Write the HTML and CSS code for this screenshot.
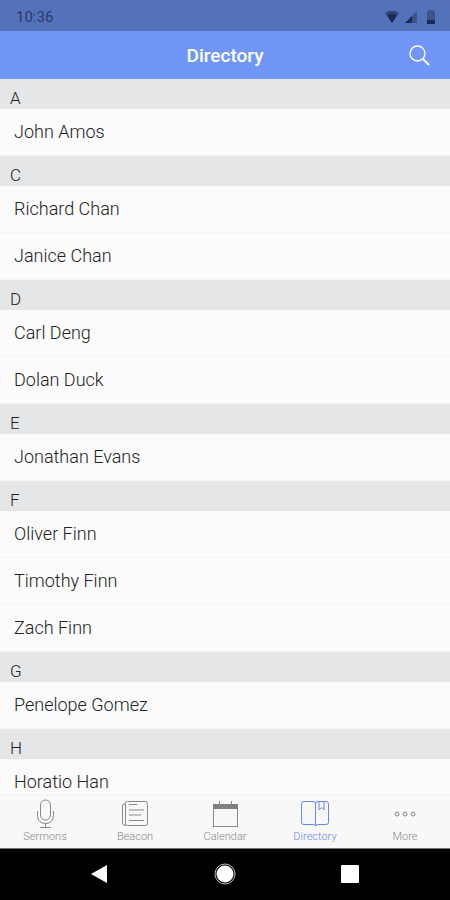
FILE: index.html
```html
<!DOCTYPE html>
<html lang="en">
<head>
<meta charset="utf-8">
<meta name="viewport" content="width=device-width, initial-scale=1">
<title>Directory</title>
<link rel="stylesheet" href="styles.css">
</head>
<body>
<div class="status">
  <span>10:36</span>
  <div class="status-icons">
    <svg width="16" height="14" viewBox="0 0 16 14"><path d="M1 3Q8-2 15 3L8 13Z" fill="#35477c"/><path d="M3 5Q8 2 13 5L8 13Z" fill="#1e2b55"/></svg>
    <svg width="14" height="14" viewBox="0 0 14 14"><path d="M13 1V13H1Z" fill="#3f5388"/><path d="M8 6V13H1Z" fill="#1e2b55"/></svg>
    <svg width="10" height="14" viewBox="0 0 10 14"><path d="M3 0H7V1H9V14H1V1H3Z" fill="#3f5388"/><path d="M1 10H9V14H1Z" fill="#1e2b55"/></svg>
  </div>
</div>
<header class="bar">
  <h1>Directory</h1>
  <button class="search" type="button" aria-label="Search">
    <svg width="22" height="22" viewBox="0 0 22 22" fill="none" stroke="#fff"><circle cx="9.500" cy="9.500" r="7.500" stroke-width="1.300"/><path d="M15 15L21 21" stroke-width="2"/></svg>
  </button>
</header>
<main class="list">
  <section><h2>A</h2><ul><li>John Amos</li></ul></section>
  <section><h2>C</h2><ul><li>Richard Chan</li><li>Janice Chan</li></ul></section>
  <section><h2>D</h2><ul><li>Carl Deng</li><li>Dolan Duck</li></ul></section>
  <section><h2>E</h2><ul><li>Jonathan Evans</li></ul></section>
  <section><h2>F</h2><ul><li>Oliver Finn</li><li>Timothy Finn</li><li>Zach Finn</li></ul></section>
  <section><h2>G</h2><ul><li>Penelope Gomez</li></ul></section>
  <section><h2>H</h2><ul><li>Horatio Han</li></ul></section>
</main>
<nav class="tabs">
  <a href="#sermons"><svg width="30" height="30" viewBox="0 0 30 30"><rect x="10.500" y="1" width="10" height="20" rx="5"/><path d="M7.500 12V16.500Q8 24.500 15.500 24.500T23.500 16.500V12M15.500 24.500V29M10 28.500H21"/></svg>Sermons</a>
  <a href="#beacon"><svg width="30" height="30" viewBox="0 0 30 30"><rect x="5.500" y="2.500" width="22" height="24" rx="2"/><path d="M5.500 5H4Q2.500 5 2.500 7V24Q2.500 26.500 6 26.500M9 5.500H17M9 11H24M9 16H21M9 21.500H24"/></svg>Beacon</a>
  <a href="#calendar"><svg width="30" height="30" viewBox="0 0 30 30"><rect x="3.500" y="5.500" width="24" height="22"/><path class="solid" d="M3 5H28V10H3Z"/><path d="M9.500 2V6M21.500 2V6"/></svg>Calendar</a>
  <a href="#directory" class="active" aria-current="page"><svg width="30" height="30" viewBox="0 0 30 30"><path d="M4 2.500H13L15.500 3.500L18 2.500H26Q28.500 2.500 28.500 5V23.500Q28.500 25.500 26 25.500H18L15.500 26.500L13 25.500H4Q1.500 25.500 1.500 23.500V5Q1.500 2.500 4 2.500M15.500 3.500V27M19 3V11L21.500 8.500L24 11V3"/></svg>Directory</a>
  <a href="#more"><svg width="30" height="30" viewBox="0 0 30 30"><circle cx="7" cy="15" r="2"/><circle cx="15" cy="15" r="2"/><circle cx="23" cy="15" r="2"/></svg>More</a>
</nav>
<div class="system">
  <button type="button" aria-label="Back"><svg width="24" height="24" viewBox="0 0 24 24"><path d="M3 12L19 3V21Z" fill="#fff"/></svg></button>
  <button type="button" aria-label="Home"><svg width="24" height="24" viewBox="0 0 24 24"><circle cx="12" cy="12" r="8.500" fill="#fff"/><circle cx="12" cy="12" r="10" fill="none" stroke="#bbb"/></svg></button>
  <button type="button" aria-label="Recent apps"><svg width="24" height="24" viewBox="0 0 24 24"><rect x="3" y="3" width="18" height="18" rx="1" fill="#fff"/></svg></button>
</div>
</body>
</html>
```
FILE: styles.css
```css
* { box-sizing: border-box; }
body {
  margin: 0;
  height: 100vh;
  display: flex;
  flex-direction: column;
  background: #fbfbfb;
  color: #222;
  font-family: Roboto, sans-serif;
  font-size: 18px;
  font-weight: 300;
}
svg { display: block; }
button { border: 0; padding: 0; background: none; }
.status {
  flex: none;
  height: 31px;
  padding: 2px 14px 0 16px;
  display: flex;
  align-items: center;
  justify-content: space-between;
  background: #5472b9;
  color: #2b3a66;
  font-size: 15px;
  font-weight: 400;
}
.status-icons { display: flex; gap: 4px; }
.status-icons svg:last-child { margin-left: 4px; }
.bar {
  flex: none;
  height: 48px;
  padding: 0 20px;
  display: grid;
  grid-template-columns: 1fr auto 1fr;
  align-items: center;
  background: #7097f8;
  color: #fff;
}
h1 { margin: 0; grid-column: 2; font-size: 19px; font-weight: 500; }
.search { justify-self: end; }
.list { flex: 1; min-height: 0; overflow: hidden; }
h2 {
  margin: 0;
  height: 30px;
  padding: 8px 10px 0;
  background: #e4e6e8;
  font-size: 17px;
  font-weight: 300;
  line-height: 22px;
}
ul { margin: 0; padding: 0; list-style: none; }
li {
  height: 47px;
  padding: 0 14px;
  border-bottom: 1px solid #f5f5f5;
  line-height: 46px;
}
.tabs {
  flex: none;
  height: 55px;
  padding-top: 4px;
  display: grid;
  grid-template-columns: repeat(5, 1fr);
  background: #f8f8f8;
  border-top: 1px solid #f4f4f4;
  border-bottom: 1px solid #777;
}
.tabs a {
  display: flex;
  flex-direction: column;
  align-items: center;
  color: #888;
  font-size: 11px;
  line-height: 16px;
  text-decoration: none;
}
.tabs svg { fill: none; stroke: currentColor; stroke-width: 1; }
.tabs .solid { fill: #808080; stroke: none; }
.tabs .active { color: #6c84ee; }
.system {
  flex: none;
  height: 51px;
  padding: 0 37px 2px;
  display: grid;
  grid-template-columns: repeat(3, 1fr);
  place-items: center;
  background: #000;
}
```
